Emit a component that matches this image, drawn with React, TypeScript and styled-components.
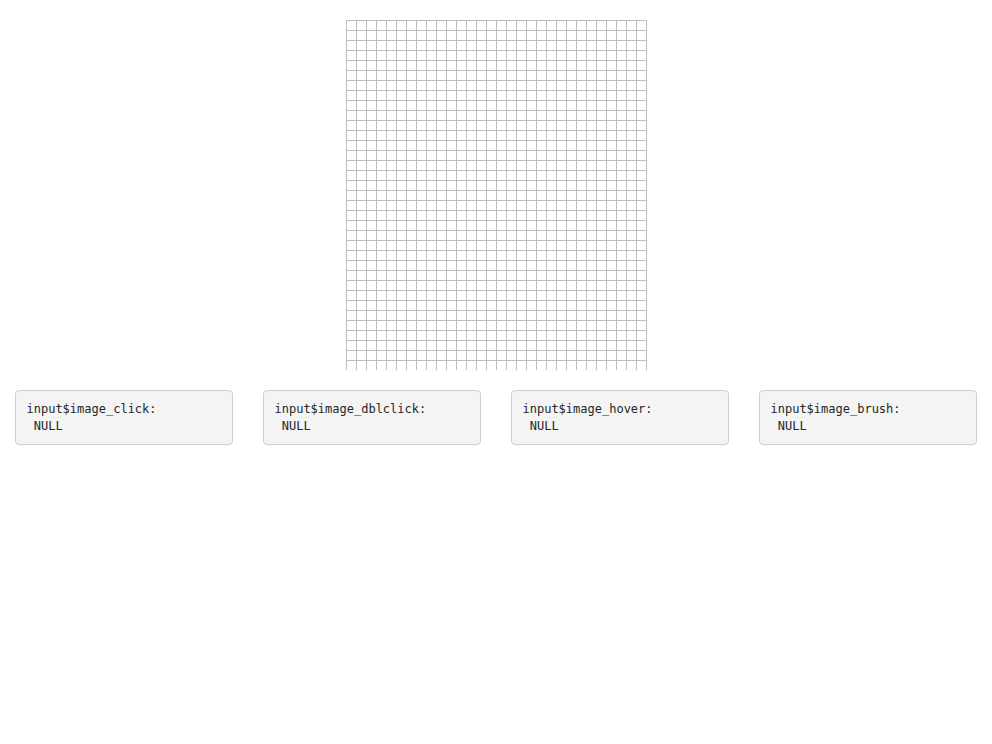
import styled, { createGlobalStyle } from "styled-components"

const GlobalStyle = createGlobalStyle`
  html, body {
    margin: 0;
    padding: 0;
    background: #fff;
    font-family: "Liberation Sans", Arial, sans-serif;
    color: #333;
  }
`

const outputs: string[] = ["image_click", "image_dblclick", "image_hover", "image_brush"]

const GRID_W = 300
const GRID_H = 350
const STEP = 10

const GridImage: React.FC = () => {
  const vLines: number[] = []
  for (let x = 0; x <= GRID_W; x += STEP) vLines.push(x)
  const hLines: number[] = []
  for (let y = 0; y < GRID_H; y += STEP) hLines.push(y)

  return (
    <svg width={GRID_W + 1} height={GRID_H} viewBox={`0 0 ${GRID_W + 1} ${GRID_H}`}>
      <rect width={GRID_W + 1} height={GRID_H} fill="#fff" />
      {vLines.map((x) => (
        <line key={`v${x}`} x1={x + 0.5} y1={0} x2={x + 0.5} y2={GRID_H} stroke="#bdbdbd" strokeWidth={1} />
      ))}
      {hLines.map((y) => (
        <line key={`h${y}`} x1={0} y1={y + 0.5} x2={GRID_W + 1} y2={y + 0.5} stroke="#bdbdbd" strokeWidth={1} />
      ))}
    </svg>
  )
}

export default function App() {
  return (
    <Page>
      <GlobalStyle />
      <ImageWrap>
        <GridImage />
      </ImageWrap>
      <Row>
        {outputs.map((name) => (
          <Col key={name}>
            <Verbatim>{`input$${name}:\n NULL`}</Verbatim>
          </Col>
        ))}
      </Row>
    </Page>
  )
}

const Page = styled.div`
  padding: 20px 0 0;
`

const ImageWrap = styled.div`
  display: flex;
  justify-content: center;
  height: 350px;

  svg {
    display: block;
    margin-left: 1px;
  }
`

const Row = styled.div`
  display: grid;
  grid-template-columns: repeat(4, 1fr);
  margin-top: 20px;
`

const Col = styled.div`
  padding: 0 15px;
`

const Verbatim = styled.pre`
  margin: 0;
  padding: 9.5px 9.5px 9.5px 10.5px;
  background: #f4f4f4;
  border: 1px solid #cfcfcf;
  border-radius: 4px;
  font-family: "DejaVu Sans Mono", "Liberation Mono", monospace;
  font-size: 12px;
  line-height: 17px;
  color: #262626;
  white-space: pre;
`
